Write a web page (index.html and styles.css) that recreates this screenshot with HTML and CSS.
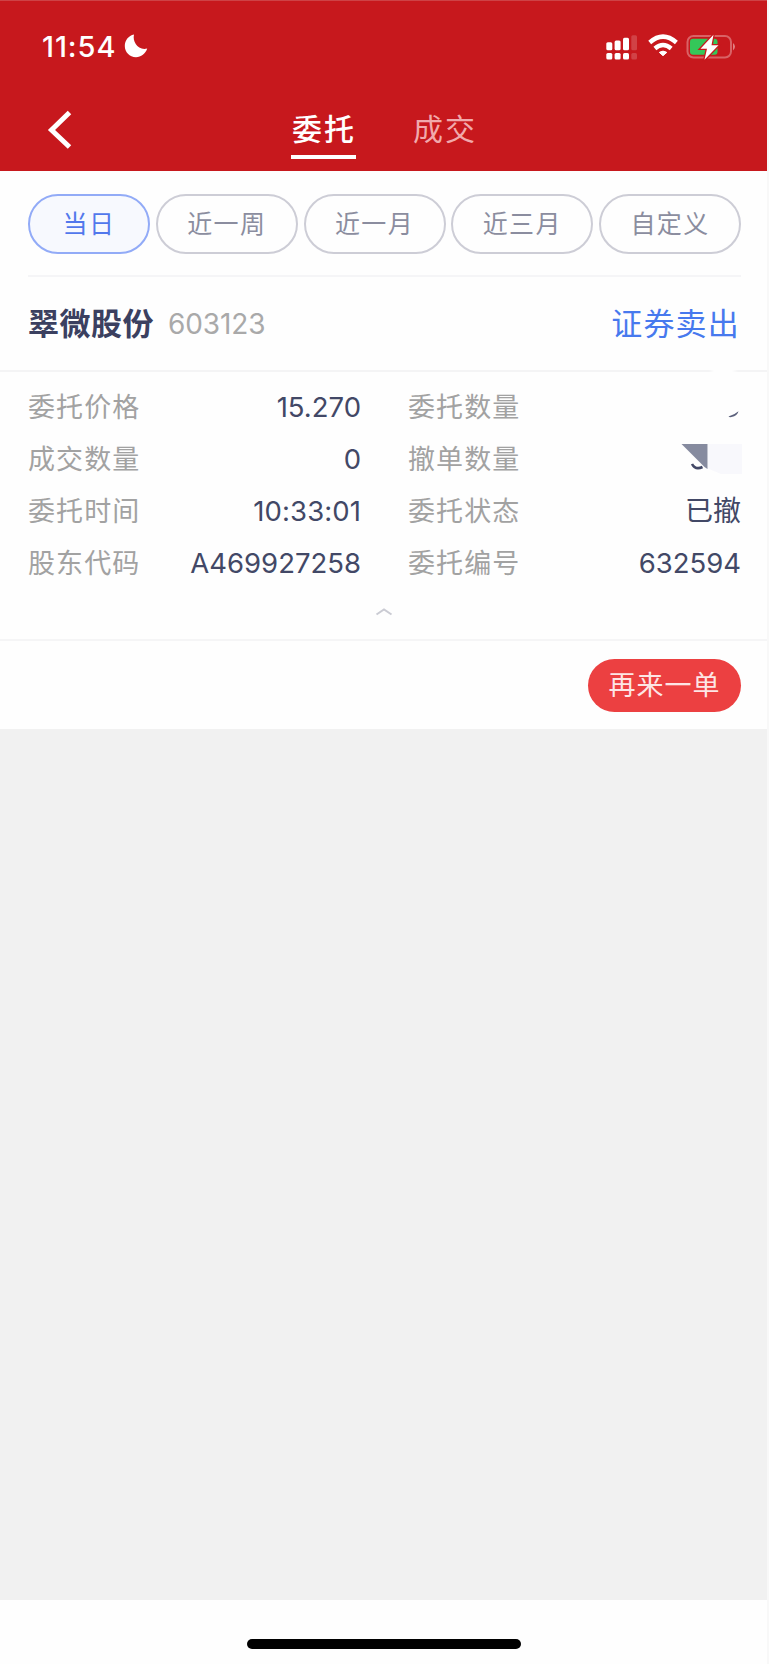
FILE: index.html
```html
<!DOCTYPE html>
<html lang="zh-CN">
<head>
<meta charset="utf-8">
<title>委托</title>
<link rel="stylesheet" href="styles.css">
</head>
<body>
<div class="screen">
  <header class="header">
    <div class="status">
      <span class="time">11:54</span>
      <svg class="moon" width="24" height="24" viewBox="0 0 24 24"><path d="M10 .5C8.200 7.500 14 17 23.200 14.600C21.500 20 17 23.200 12 23.200C5.500 23.200 .8 18 .8 12C.8 6.500 4.500 1.500 10 .5Z" fill="#fff"/></svg>
      <svg class="indicators" width="134" height="28" viewBox="0 0 134 28">
        <g fill="#fff">
          <rect x="2.300" y="8.300" width="6" height="8" rx="1.500"/><rect x="10.600" y="6.600" width="6" height="9.700" rx="1.500"/><rect x="19" y="3.800" width="6" height="12.500" rx="1.500"/>
          <rect x="2.300" y="19" width="6" height="6.500" rx="1.500"/><rect x="10.600" y="19" width="6" height="6.500" rx="1.500"/><rect x="19" y="19" width="6" height="6.500" rx="1.500"/>
          <g opacity=".18"><rect x="27.300" y="1.300" width="5.700" height="15" rx="1.500"/><rect x="27.300" y="19" width="5.700" height="6.500" rx="1.500"/></g>
        </g>
        <g transform="translate(4.700 -.5)">
          <path d="M54.300 22.200L50.600 18.900Q54.300 16.300 58.100 18.900Z" fill="#fff" stroke="#fff" stroke-linejoin="round"/>
          <g fill="none" stroke="#fff" stroke-width="4.400"><path d="M41 9Q54.300 -2.700 67.700 9"/><path d="M46.200 15Q54.300 8 62.500 15"/></g>
        </g>
        <rect x="83.500" y="2" width="43.500" height="21.500" rx="6" fill="none" stroke="#fff" stroke-opacity=".32" stroke-width="2"/>
        <path d="M129 9Q133 12.700 129 16.500Z" fill="#fff" opacity=".45"/>
        <rect x="86" y="4.800" width="27.500" height="16" rx="3" fill="#34c759"/>
        <path d="M109.500 .8L96.500 14.800H103L100.500 25.800L114.500 11.200H107.500Z" fill="#fff" stroke="#c7181d" stroke-width="2.600" paint-order="stroke"/>
      </svg>
    </div>
    <nav class="nav">
      <svg class="back" width="26" height="40" viewBox="0 0 26 40"><path d="M22.500 2.500L4.500 20L22.500 37" fill="none" stroke="#fff" stroke-width="5"/></svg>
      <span class="tab tab-active">委托</span>
      <span class="tab">成交</span>
    </nav>
  </header>
  <section class="filters">
    <span class="chip chip-active">当日</span><span class="chip">近一周</span><span class="chip">近一月</span><span class="chip">近三月</span><span class="chip">自定义</span>
  </section>
  <section class="title">
    <span class="name">翠微股份</span><span class="code">603123</span><span class="side">证券卖出</span>
  </section>
  <section class="details">
    <div class="line"></div>
    <div class="grid">
      <span class="label">委托价格</span><span class="value">15.270</span><span class="label second">委托数量</span>
      <svg class="redacted" width="62" height="31" viewBox="0 0 62 31"><path d="M47.500 24.500Q53 23 57.500 19.200Q56.500 24 50.500 25Q48.500 25.500 47.500 24.500Z" fill="#5b607b"/></svg>
      <span class="label">成交数量</span><span class="value">0</span><span class="label second">撤单数量</span>
      <svg class="redacted" width="62" height="31" viewBox="0 0 62 31"><path d="M27 0H61V30H40L27 24.500Z" fill="#f8f8fc"/><path d="M.5 0H26.500V25L23.500 23Z" fill="#868b9f"/><path d="M11 20Q14.500 26.500 21.500 23" fill="none" stroke="#424866" stroke-width="2.600"/></svg>
      <span class="label">委托时间</span><span class="value clock">10:33:01</span><span class="label second">委托状态</span><span class="value state">已撤</span>
      <span class="label">股东代码</span><span class="value">A469927258</span><span class="label second">委托编号</span><span class="value">632594</span>
    </div>
    <svg class="collapse" width="18" height="10" viewBox="0 0 18 10"><path d="M1.500 7.500L9 2.500L16.500 7.500" fill="none" stroke="#cacbd3" stroke-width="2"/></svg>
  </section>
  <section class="actions"><span class="again">再来一单</span></section>
  <main class="empty"></main>
  <footer class="home"><div class="home-bar"></div></footer>
</div>
</body>
</html>
```
FILE: styles.css
```css
* { box-sizing: border-box; }
body { margin: 0; background: #fdfdfd; font-family: Inter, "Noto Sans CJK SC", sans-serif; }
.screen { width: 769px; height: 1664px; display: flex; flex-direction: column; background: #fefefe; border-right: 2px solid #f8f8f8; white-space: nowrap; }
.header { height: 171px; background: #c7181d; border-top: 1px solid #ce4246; color: #fff; }
.status { height: 91px; display: flex; align-items: flex-start; padding: 33px 29px 0 42px; }
.time { font-size: 29px; font-weight: 550; line-height: 25px; width: 75px; letter-spacing: .9px; }
.moon { margin: 0 0 0 7px; }
.indicators { margin-left: auto; }
.nav { height: 79px; display: flex; align-items: flex-start; padding-left: 47px; }
.back { margin-top: 18px; }
.tab { width: 65px; height: 67px; margin-left: 56px; padding-left: 1px; font-size: 30px; line-height: 75px; letter-spacing: 2px; color: #f1a9ac; }
.tab-active { margin-left: 218px; font-weight: 500; color: #fff; border-bottom: 4px solid #fff; }
.filters { height: 106px; margin: 0 26px 0 28px; padding-top: 23px; border-bottom: 2px solid #f5f5f7; display: flex; align-items: flex-start; justify-content: space-between; }
.chip { width: 142px; height: 60px; border: 2px solid #cdcdd6; border-radius: 30px; text-align: center; font-size: 25px; line-height: 57px; letter-spacing: 1.4px; color: #8b8d9f; }
.chip-active { width: 122px; background: #f7f9fe; border-color: #92abf7; color: #5278ec; }
.title { height: 93px; padding: 0 27px 0 28px; display: flex; align-items: center; }
.name { margin-top: -4px; font-size: 31px; font-weight: 700; color: #3b4060; letter-spacing: .5px; }
.code { margin-left: 14px; font-size: 28px; color: #a9a9a9; letter-spacing: -.1px; }
.side { margin: -4px 0 0 auto; font-size: 31px; letter-spacing: 1.2px; color: #4779ee; }
.details { height: 271px; display: flex; flex-direction: column; border-bottom: 2px solid #f5f5f6; }
.line { height: 2px; background: linear-gradient(90deg, #f4f4f5 0 709px, #fefefe 714px 732px, #f4f4f5 738px); }
.grid { padding: 10px 26px 0 28px; display: grid; grid-template-columns: 140px 193px 159px 1fr; grid-template-rows: repeat(4, 52px); line-height: 52px; }
.label { font-size: 27px; letter-spacing: 1.1px; color: #a2a2a2; }
.second { padding-left: 47px; }
.value { margin-top: -1px; text-align: right; font-size: 27.5px; font-weight: 420; color: #424866; }
.clock { letter-spacing: .1px; }
.state { font-weight: 400; font-size: 28px; }
.redacted { justify-self: end; align-self: start; margin: 10px -2px 0 0; }
.collapse { margin: 17px 0 0 375px; }
.actions { height: 88px; display: flex; justify-content: flex-end; padding: 18px 26px 0 0; }
.again { width: 153px; height: 53px; border-radius: 27px; background: #ec4041; color: #fde5e5; font-size: 27px; line-height: 54px; letter-spacing: 1px; text-align: center; }
.empty { flex: 1; background: #f1f1f1; }
.home { height: 64px; padding: 39px 0 0 247px; }
.home-bar { width: 274px; height: 10px; border-radius: 5px; background: #000; }
```
